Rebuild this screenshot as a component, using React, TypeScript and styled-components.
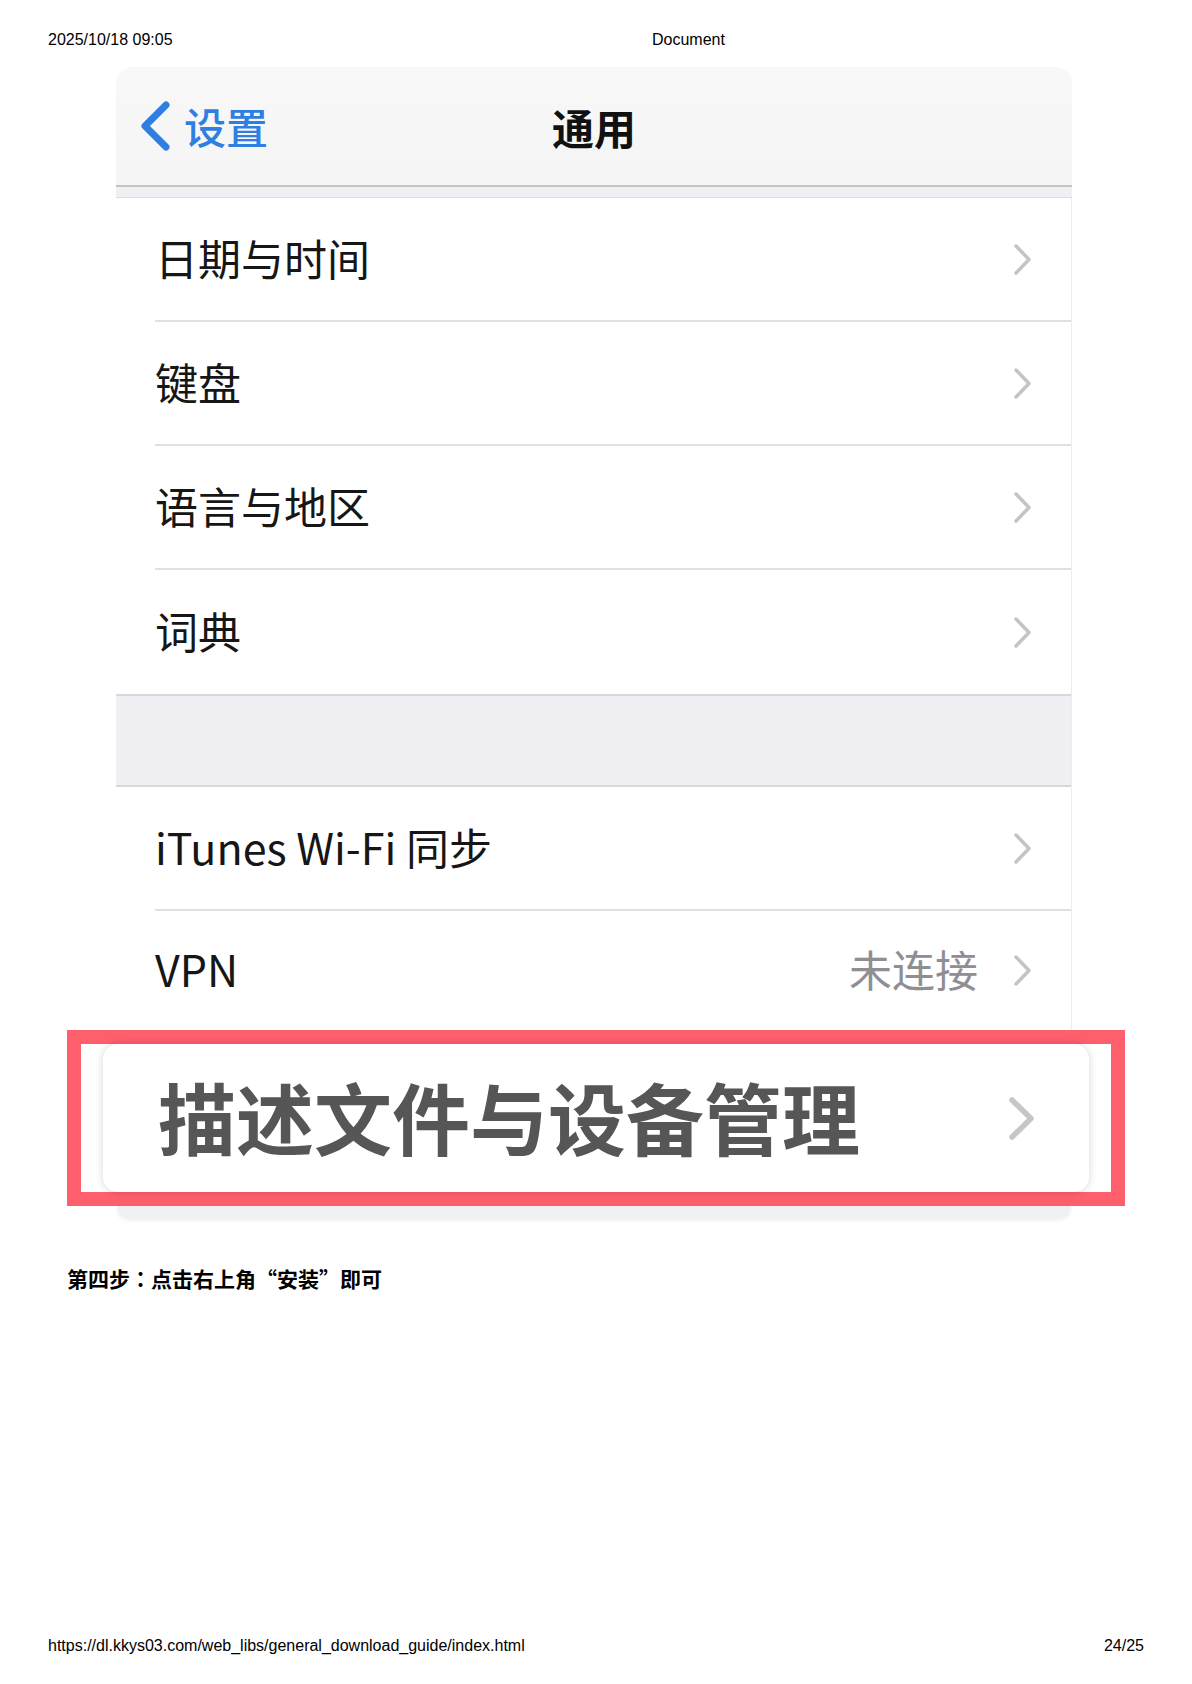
import styled, { createGlobalStyle } from 'styled-components'

const GlobalStyle = createGlobalStyle`
  html, body {
    margin: 0;
    padding: 0;
    background: #ffffff;
  }
  * {
    box-sizing: border-box;
  }
`

const CJK = `"Noto Sans CJK SC", "Noto Sans", sans-serif`

const Page = styled.div`
  width: 1192px;
  height: 1684px;
  display: flex;
  flex-direction: column;
  font-family: ${CJK};
`

const PrintHeader = styled.header`
  display: grid;
  grid-template-columns: 604px 1fr;
  padding: 31px 48px 0;
  font-family: 'Liberation Sans', Arial, sans-serif;
  font-size: 16px;
  line-height: 18px;
  color: #000;
`

const PrintFooter = styled.footer`
  margin-top: auto;
  display: flex;
  justify-content: space-between;
  padding: 0 48px 29px;
  font-family: 'Liberation Sans', Arial, sans-serif;
  font-size: 16px;
  line-height: 18px;
  color: #000;
`

const Shot = styled.div`
  width: 956px;
  margin: 18px 0 0 116px;
`

const NavBar = styled.div`
  height: 120px;
  display: grid;
  grid-template-columns: 1fr auto 1fr;
  align-items: center;
  background: linear-gradient(#f8f8f8, #f5f5f6);
  border-radius: 16px 16px 0 0;
  border-bottom: 2px solid #c3c3c5;
  padding: 0 22px;
`

const BackLink = styled.div`
  display: flex;
  align-items: center;
  gap: 12px;
  color: #2f7fe2;
  font-size: 42px;
  font-weight: 500;
  line-height: 1;
`

const NavTitle = styled.div`
  font-size: 42px;
  font-weight: 700;
  color: #111;
  line-height: 1;
  padding-top: 2px;
`

const Band = styled.div`
  height: 11px;
  background: #efeff4;
  border-bottom: 1px solid #dedee2;
`

const List = styled.div`
  background: #fff;
  border-right: 1px solid #e6f3dd;
`

const Row = styled.div`
  padding-left: 39px;
`

const RowInner = styled.div<{ $last?: boolean; $h?: number }>`
  height: ${(p) => (p.$h ?? 124)}px;
  display: flex;
  align-items: center;
  padding-right: 39px;
  border-bottom: ${(p) => (p.$last ? 'none' : '2px solid #e0e0e2')};
`

const Label = styled.div`
  flex: 1;
  font-size: 43px;
  font-weight: 400;
  color: #161616;
  line-height: 1;
  padding-bottom: 4px;
`

const Detail = styled.div`
  font-size: 43px;
  color: #8e8e93;
  line-height: 1;
  padding-bottom: 4px;
  margin-right: 35px;
`

const Gap = styled.div`
  height: 93px;
  background: #efeff4;
  border-top: 2px solid #d8d8dc;
  border-bottom: 2px solid #d8d8dc;
`

const Highlight = styled.div`
  margin: 0 -53px 0 -49px;
  height: 176px;
  border: 14px solid #fe5f6d;
  padding: 0 22px;
  background: #fff;
`

const ZoomCard = styled.div`
  height: 148px;
  display: flex;
  align-items: center;
  padding: 0 54px 0 55px;
  background: #fff;
  border-radius: 15px;
  box-shadow: 0 0 9px rgba(0, 0, 0, 0.16);
`

const ZoomLabel = styled.div`
  flex: 1;
  font-size: 78px;
  font-weight: 700;
  color: #565656;
  line-height: 1;
  padding-bottom: 4px;
`

const CardFoot = styled.div`
  height: 12px;
  margin: 0 1px;
  background: #f1f1f4;
  border-radius: 0 0 14px 14px;
  box-shadow: 0 2px 4px rgba(0, 0, 0, 0.07);
`

const Step = styled.p`
  margin: 46px 0 0 67px;
  font-size: 21px;
  font-weight: 700;
  line-height: 28px;
  color: #000;
`

// the colon sits centred in its box, as the TC face draws it
const Colon = styled.span`
  font-family: "Noto Sans CJK TC", sans-serif;
`

function Chevron({ big }: { big?: boolean }) {
  if (big) {
    return (
      <svg width="27" height="45" viewBox="0 0 27 45">
        <path d="M4 4 L23 22.5 L4 41" fill="none" stroke="#c6c6c8" strokeWidth="5.5" strokeLinecap="round" strokeLinejoin="round" />
      </svg>
    )
  }
  return (
    <svg width="19" height="33" viewBox="0 0 19 33">
      <path d="M3 3 L16 16.5 L3 30" fill="none" stroke="#c4c4c7" strokeWidth="3.5" strokeLinecap="round" strokeLinejoin="round" />
    </svg>
  )
}

function BackChevron() {
  return (
    <svg width="34" height="52" viewBox="0 0 34 52">
      <path d="M28 5 L7 26 L28 47" fill="none" stroke="#2f7fe2" strokeWidth="7" strokeLinecap="round" strokeLinejoin="round" />
    </svg>
  )
}

const firstGroup = ['日期与时间', '键盘', '语言与地区', '词典']

export default function App() {
  return (
    <Page>
      <GlobalStyle />
      <PrintHeader>
        <span>2025/10/18 09:05</span>
        <span>Document</span>
      </PrintHeader>

      <Shot>
        <NavBar>
          <BackLink>
            <BackChevron />
            设置
          </BackLink>
          <NavTitle>通用</NavTitle>
          <div />
        </NavBar>
        <Band />
        <List>
          {firstGroup.map((label, i) => (
            <Row key={label}>
              <RowInner $last={i === firstGroup.length - 1}>
                <Label>{label}</Label>
                <Chevron />
              </RowInner>
            </Row>
          ))}
          <Gap />
          <Row>
            <RowInner>
              <Label>iTunes Wi-Fi 同步</Label>
              <Chevron />
            </RowInner>
          </Row>
          <Row>
            <RowInner $last $h={119}>
              <Label>VPN</Label>
              <Detail>未连接</Detail>
              <Chevron />
            </RowInner>
          </Row>
        </List>
        <Highlight>
          <ZoomCard>
            <ZoomLabel>描述文件与设备管理</ZoomLabel>
            <Chevron big />
          </ZoomCard>
        </Highlight>
        <CardFoot />
      </Shot>

      <Step>
        第四步<Colon>：</Colon>点击右上角“安装”即可
      </Step>

      <PrintFooter>
        <span>https://dl.kkys03.com/web_libs/general_download_guide/index.html</span>
        <span>24/25</span>
      </PrintFooter>
    </Page>
  )
}
